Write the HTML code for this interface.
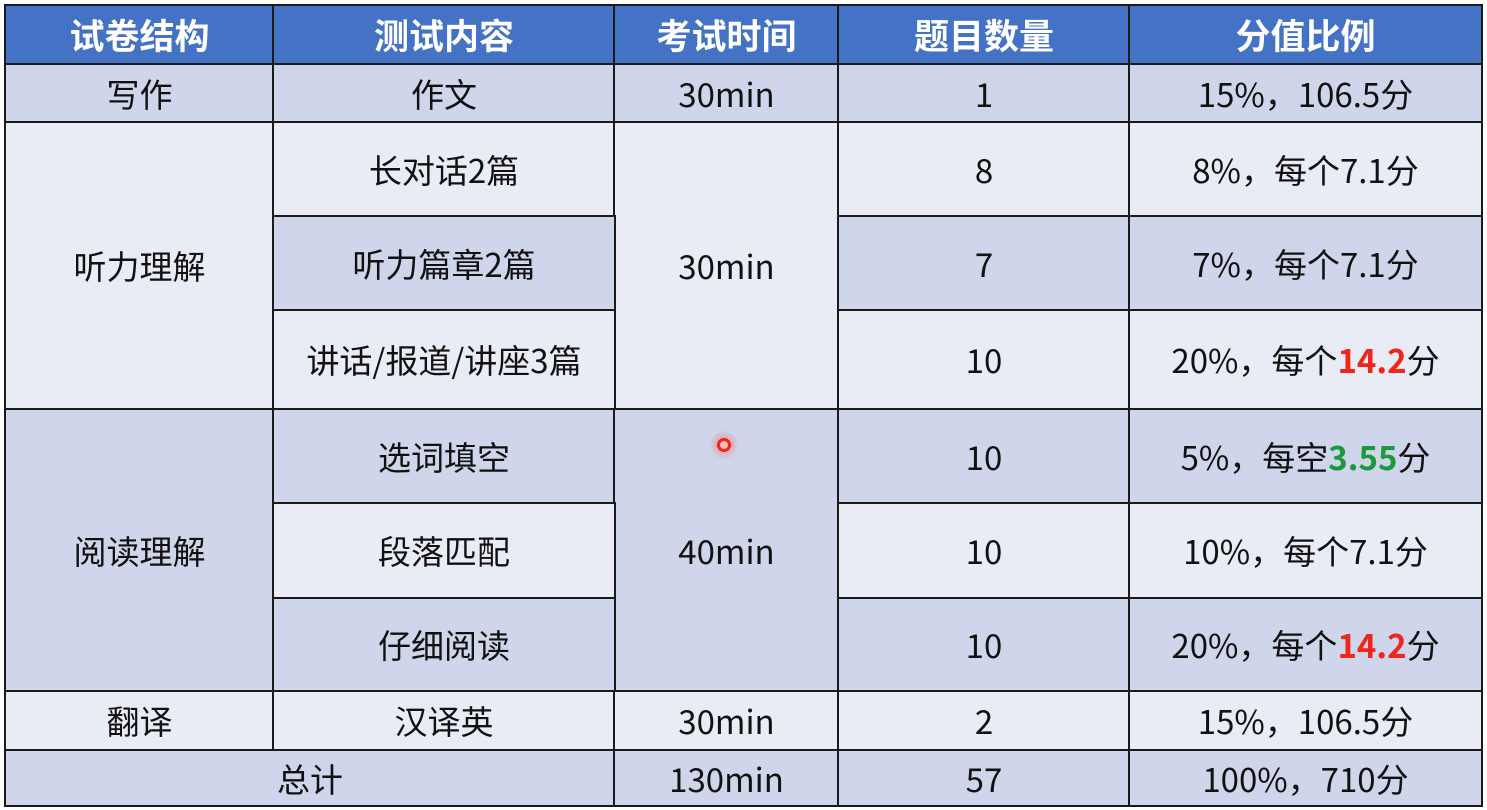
<!DOCTYPE html><html><head><meta charset="utf-8"><style>
body{margin:0;width:1487px;height:810px;background:#fff;position:relative;overflow:hidden;font-family:"Noto Sans CJK SC","Liberation Sans",sans-serif;font-size:33px;color:#111}
.c{position:absolute;display:flex;align-items:center;justify-content:center;border:2px solid #1a1a1a;box-sizing:border-box;white-space:nowrap;line-height:1}
.h{background:#4472C4;color:#fff;font-weight:bold;font-size:35px}
.d{background:#CFD5EA}.l{background:#E9EBF5}
.r{color:#f0261b;font-weight:bold}.g{color:#1a9a3c;font-weight:bold}
.A{left:4px;width:271px}.B{left:272px;width:344px}.C{left:613px;width:227px}.D{left:837px;width:294px}.E{left:1128px;width:355px}
</style></head><body>
<div class="c h A" style="top:4px;height:61px">试卷结构</div>
<div class="c h B" style="top:4px;height:61px">测试内容</div>
<div class="c h C" style="top:4px;height:61px">考试时间</div>
<div class="c h D" style="top:4px;height:61px">题目数量</div>
<div class="c h E" style="top:4px;height:61px">分值比例</div>

<div class="c d A" style="top:63px;height:60px">写作</div>
<div class="c d B" style="top:63px;height:60px">作文</div>
<div class="c d C" style="top:63px;height:60px">30min</div>
<div class="c d D" style="top:63px;height:60px">1</div>
<div class="c d E" style="top:63px;height:60px">15%，106.5分</div>

<div class="c l A" style="top:121px;height:289px">听力理解</div>
<div class="c l B" style="top:121px;height:96px">长对话2篇</div>
<div class="c l C" style="top:121px;height:289px">30min</div>
<div class="c l D" style="top:121px;height:96px">8</div>
<div class="c l E" style="top:121px;height:96px">8%，每个7.1分</div>
<div class="c d B" style="top:215px;height:96px">听力篇章2篇</div>
<div class="c d D" style="top:215px;height:96px">7</div>
<div class="c d E" style="top:215px;height:96px">7%，每个7.1分</div>
<div class="c l B" style="top:309px;height:101px">讲话/报道/讲座3篇</div>
<div class="c l D" style="top:309px;height:101px">10</div>
<div class="c l E" style="top:309px;height:101px">20%，每个<span class="r">14.2</span>分</div>

<div class="c d A" style="top:408px;height:284px">阅读理解</div>
<div class="c d B" style="top:408px;height:96px">选词填空</div>
<div class="c d C" style="top:408px;height:284px">40min</div>
<div class="c d D" style="top:408px;height:96px">10</div>
<div class="c d E" style="top:408px;height:96px">5%，每空<span class="g">3.55</span>分</div>
<div class="c l B" style="top:502px;height:97px">段落匹配</div>
<div class="c l D" style="top:502px;height:97px">10</div>
<div class="c l E" style="top:502px;height:97px">10%，每个7.1分</div>
<div class="c d B" style="top:597px;height:95px">仔细阅读</div>
<div class="c d D" style="top:597px;height:95px">10</div>
<div class="c d E" style="top:597px;height:95px">20%，每个<span class="r">14.2</span>分</div>

<div class="c l A" style="top:690px;height:61px">翻译</div>
<div class="c l B" style="top:690px;height:61px">汉译英</div>
<div class="c l C" style="top:690px;height:61px">30min</div>
<div class="c l D" style="top:690px;height:61px">2</div>
<div class="c l E" style="top:690px;height:61px">15%，106.5分</div>

<div class="c d" style="left:4px;width:612px;top:749px;height:58px">总计</div>
<div class="c d C" style="top:749px;height:58px">130min</div>
<div class="c d D" style="top:749px;height:58px">57</div>
<div class="c d E" style="top:749px;height:58px">100%，710分</div>

<div style="position:absolute;left:709px;top:430px;width:30px;height:30px;border-radius:50%;background:radial-gradient(circle,rgba(255,60,40,.5),rgba(255,60,40,0) 70%)"></div>
<div style="position:absolute;left:717px;top:438px;width:8px;height:8px;border:3px solid #f0261b;border-radius:50%;background:#fbb"></div>
</body></html>
